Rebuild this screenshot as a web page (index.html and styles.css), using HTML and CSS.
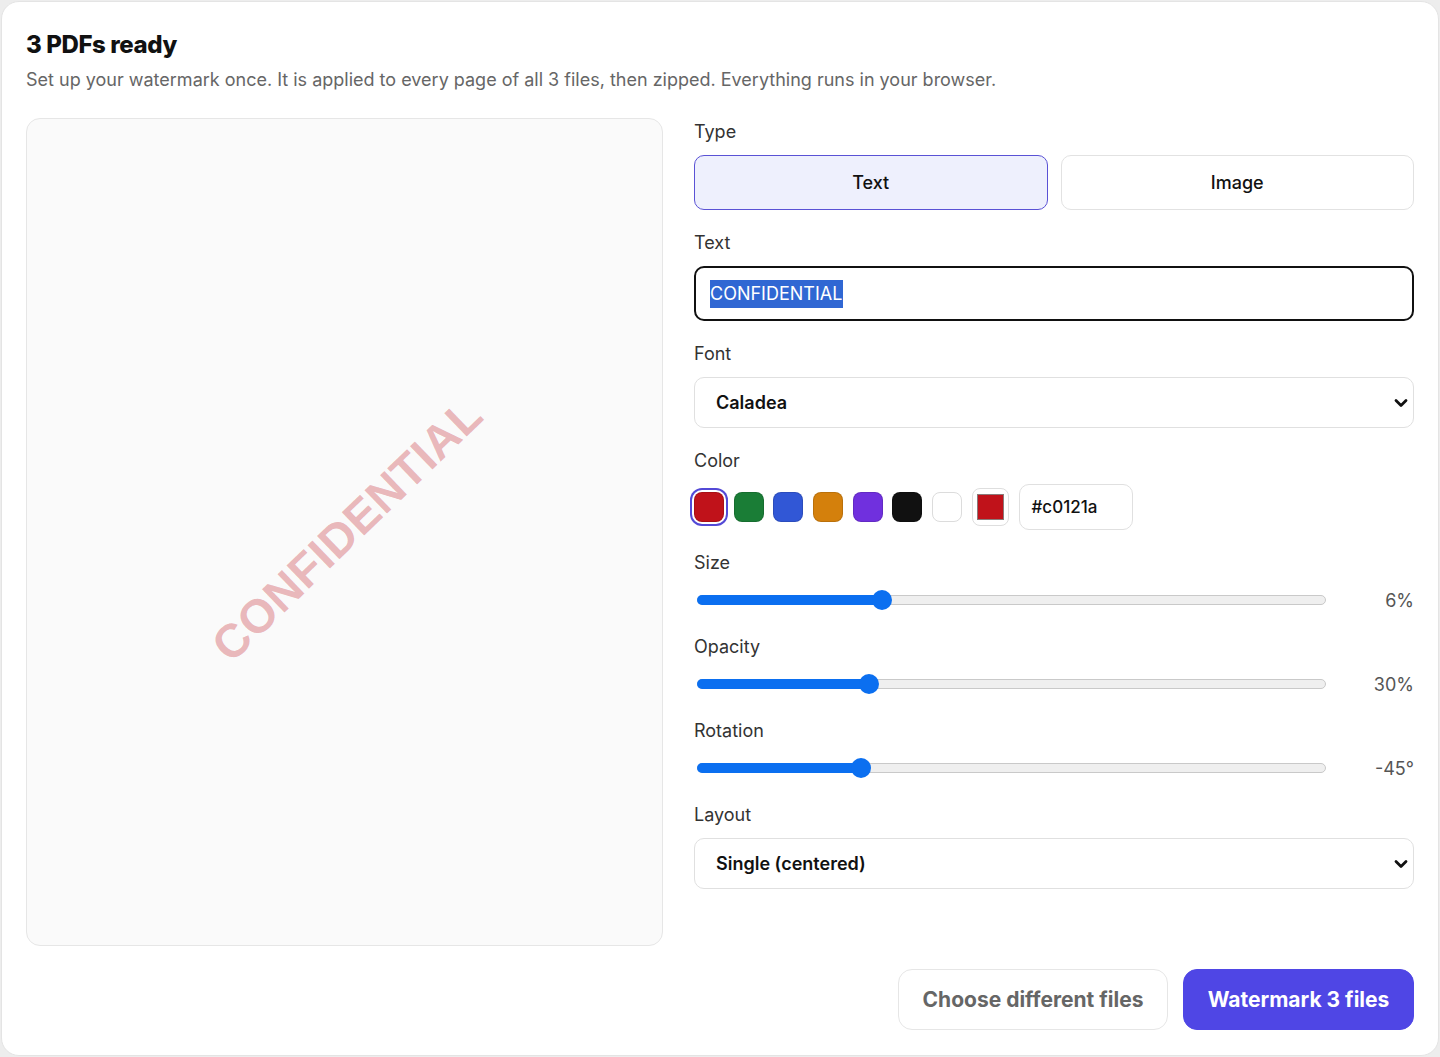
FILE: index.html
```html
<!DOCTYPE html>
<html lang="en">
<head>
<meta charset="utf-8">
<title>Watermark PDFs</title>
<link rel="stylesheet" href="styles.css">
</head>
<body>
<main class="card">
  <header class="head">
    <h1 class="title">3 PDFs ready</h1>
    <p class="subtitle">Set up your watermark once. It is applied to every page of all 3 files, then zipped. Everything runs in your browser.</p>
  </header>

  <section class="body">
    <div class="preview">
      <span class="wm">CONFIDENTIAL</span>
    </div>

    <div class="controls">
      <div class="field">
        <div class="label">Type</div>
        <div class="seg">
          <button class="seg-btn is-active">Text</button>
          <button class="seg-btn">Image</button>
        </div>
      </div>

      <div class="field">
        <div class="label">Text</div>
        <div class="text-input"><span class="sel">CONFIDENTIAL</span></div>
      </div>

      <div class="field">
        <div class="label">Font</div>
        <div class="select">
          <span>Caladea</span>
          <svg class="chev" width="14" height="10" viewBox="0 0 14 10"><path d="M2 2.5 L7 7.5 L12 2.5" fill="none" stroke="#111" stroke-width="2.8" stroke-linecap="round" stroke-linejoin="round"/></svg>
        </div>
      </div>

      <div class="field">
        <div class="label">Color</div>
        <div class="swatches">
          <span class="sw sw-red is-active"></span>
          <span class="sw sw-green"></span>
          <span class="sw sw-blue"></span>
          <span class="sw sw-orange"></span>
          <span class="sw sw-purple"></span>
          <span class="sw sw-black"></span>
          <span class="sw sw-white"></span>
          <span class="picker"><span class="picker-fill"></span></span>
          <div class="hex">#c0121a</div>
        </div>
      </div>

      <div class="field">
        <div class="label">Size</div>
        <div class="slider-row">
          <div class="track"><div class="fill" style="width:29.3%"></div><div class="thumb" style="left:29.3%"></div></div>
          <div class="val">6%</div>
        </div>
      </div>

      <div class="field">
        <div class="label">Opacity</div>
        <div class="slider-row">
          <div class="track"><div class="fill" style="width:27.2%"></div><div class="thumb" style="left:27.2%"></div></div>
          <div class="val">30%</div>
        </div>
      </div>

      <div class="field">
        <div class="label">Rotation</div>
        <div class="slider-row">
          <div class="track"><div class="fill" style="width:26%"></div><div class="thumb" style="left:26%"></div></div>
          <div class="val">-45°</div>
        </div>
      </div>

      <div class="field">
        <div class="label">Layout</div>
        <div class="select">
          <span>Single (centered)</span>
          <svg class="chev" width="14" height="10" viewBox="0 0 14 10"><path d="M2 2.5 L7 7.5 L12 2.5" fill="none" stroke="#111" stroke-width="2.8" stroke-linecap="round" stroke-linejoin="round"/></svg>
        </div>
      </div>
    </div>
  </section>

  <footer class="actions">
    <button class="btn btn-ghost">Choose different files</button>
    <button class="btn btn-primary">Watermark 3 files</button>
  </footer>
</main>
</body>
</html>
```

FILE: styles.css
```css
* { box-sizing: border-box; }

html, body {
  margin: 0;
  padding: 0;
}

body {
  background: #ededed;
  padding: 1px 0 0 1px;
  font-family: Inter, "Liberation Sans", Arial, sans-serif;
  color: #111;
}

.card {
  width: 1438px;
  height: 1055px;
  background: #fff;
  border: 1px solid #e4e4e4;
  border-radius: 18px;
  padding: 28px 24px 24px 24px;
  display: flex;
  flex-direction: column;
}

.title {
  margin: 0;
  font-family: Inter, "Liberation Sans", sans-serif;
  font-weight: 800;
  font-size: 24px;
  line-height: 30px;
  letter-spacing: -0.4px;
  color: #111;
}

.subtitle {
  margin: 8px 0 0 0;
  font-size: 18px;
  line-height: 24px;
  color: #666;
}

.body {
  margin-top: 26px;
  display: grid;
  grid-template-columns: 637px 1fr;
  column-gap: 31px;
  align-items: start;
}

.preview {
  height: 828px;
  background: #fafafa;
  border: 1px solid #e6e6e6;
  border-radius: 14px;
  display: flex;
  align-items: center;
  justify-content: center;
  overflow: hidden;
}

.wm {
  font-family: "Liberation Sans", Arial, sans-serif;
  font-weight: 700;
  font-size: 47px;
  color: rgba(192, 18, 26, 0.3);
  transform: translate(2px, -3px) rotate(-44deg);
  white-space: nowrap;
  letter-spacing: 0.3px;
}

.controls {
  padding-top: 3px;
  display: flex;
  flex-direction: column;
  gap: 22px;
}

.field {
  display: flex;
  flex-direction: column;
  gap: 12px;
}

.label {
  font-size: 18px;
  line-height: 22px;
  color: #333;
}

.seg {
  display: grid;
  grid-template-columns: 1fr 1fr;
  gap: 13px;
}

.seg-btn {
  height: 55px;
  border: 1px solid #e2e2e2;
  background: #fff;
  border-radius: 10px;
  font-family: Inter, "Liberation Sans", sans-serif;
  font-weight: 500;
  font-size: 18px;
  color: #111;
}

.seg-btn.is-active {
  background: #eef0fd;
  border-color: #5a52d5;
}

.text-input {
  height: 55px;
  border: 2px solid #111;
  border-radius: 10px;
  display: flex;
  align-items: center;
  padding: 0 14px;
  font-size: 18px;
}

.sel {
  background: #3067d3;
  color: #fff;
  line-height: 28px;
  padding-right: 1px;
}

.select {
  height: 51px;
  border: 1px solid #e0e0e0;
  border-radius: 10px;
  display: flex;
  align-items: center;
  justify-content: space-between;
  padding: 0 5px 0 21px;
  font-family: Inter, "Liberation Sans", sans-serif;
  font-weight: 600;
  font-size: 18px;
  color: #111;
}

.chev { display: block; }

.swatches {
  display: flex;
  align-items: center;
  gap: 9.7px;
  height: 46px;
}

.sw {
  width: 30px;
  height: 30px;
  border-radius: 8px;
  border: 1px solid rgba(0, 0, 0, 0.12);
  flex: none;
}

.sw.is-active {
  box-shadow: 0 0 0 2px #fff, 0 0 0 4px #5349d6;
}

.sw-red { background: #c0121a; }
.sw-green { background: #1a7d36; }
.sw-blue { background: #3157d6; }
.sw-orange { background: #d4800c; }
.sw-purple { background: #7030de; }
.sw-black { background: #111; }
.sw-white { background: #fff; border-color: #dcdcdc; }

.picker {
  width: 37px;
  height: 38px;
  border: 1px solid #dedede;
  border-radius: 8px;
  padding: 5px 4px;
  flex: none;
  display: flex;
}

.picker-fill {
  flex: 1;
  background: #c0121a;
  border: 1px solid #8a7a7a;
}

.hex {
  width: 114px;
  height: 46px;
  border: 1px solid #e0e0e0;
  border-radius: 10px;
  display: flex;
  align-items: center;
  padding: 0 12px;
  font-family: Inter, "Liberation Sans", sans-serif;
  font-weight: 500;
  font-size: 17px;
  color: #111;
}

.slider-row {
  height: 28px;
  display: flex;
  align-items: center;
  padding-left: 3px;
}

.track {
  position: relative;
  flex: 1;
  height: 10px;
  border-radius: 5px;
  background: #efefef;
  border: 1px solid #c9c9c9;
}

.fill {
  position: absolute;
  left: -1px;
  top: -1px;
  bottom: -1px;
  background: #0b6ff0;
  border-radius: 5px 0 0 5px;
}

.thumb {
  position: absolute;
  top: 50%;
  width: 20px;
  height: 20px;
  margin: -10px 0 0 -10px;
  border-radius: 50%;
  background: #0b6ff0;
}

.val {
  width: 88px;
  text-align: right;
  font-size: 18px;
  color: #555;
}

.actions {
  margin-top: 23px;
  display: flex;
  justify-content: flex-end;
  gap: 15px;
}

.btn {
  height: 61px;
  border-radius: 14px;
  font-family: Inter, "Liberation Sans", sans-serif;
  font-weight: 700;
  font-size: 21px;
  padding: 0 20px;
}

.btn-ghost {
  width: 270px;
  background: #fff;
  border: 1px solid #e6e6e6;
  color: #666;
}

.btn-primary {
  width: 231px;
  background: #4f46e5;
  border: 1px solid #4f46e5;
  color: #fff;
}
```
